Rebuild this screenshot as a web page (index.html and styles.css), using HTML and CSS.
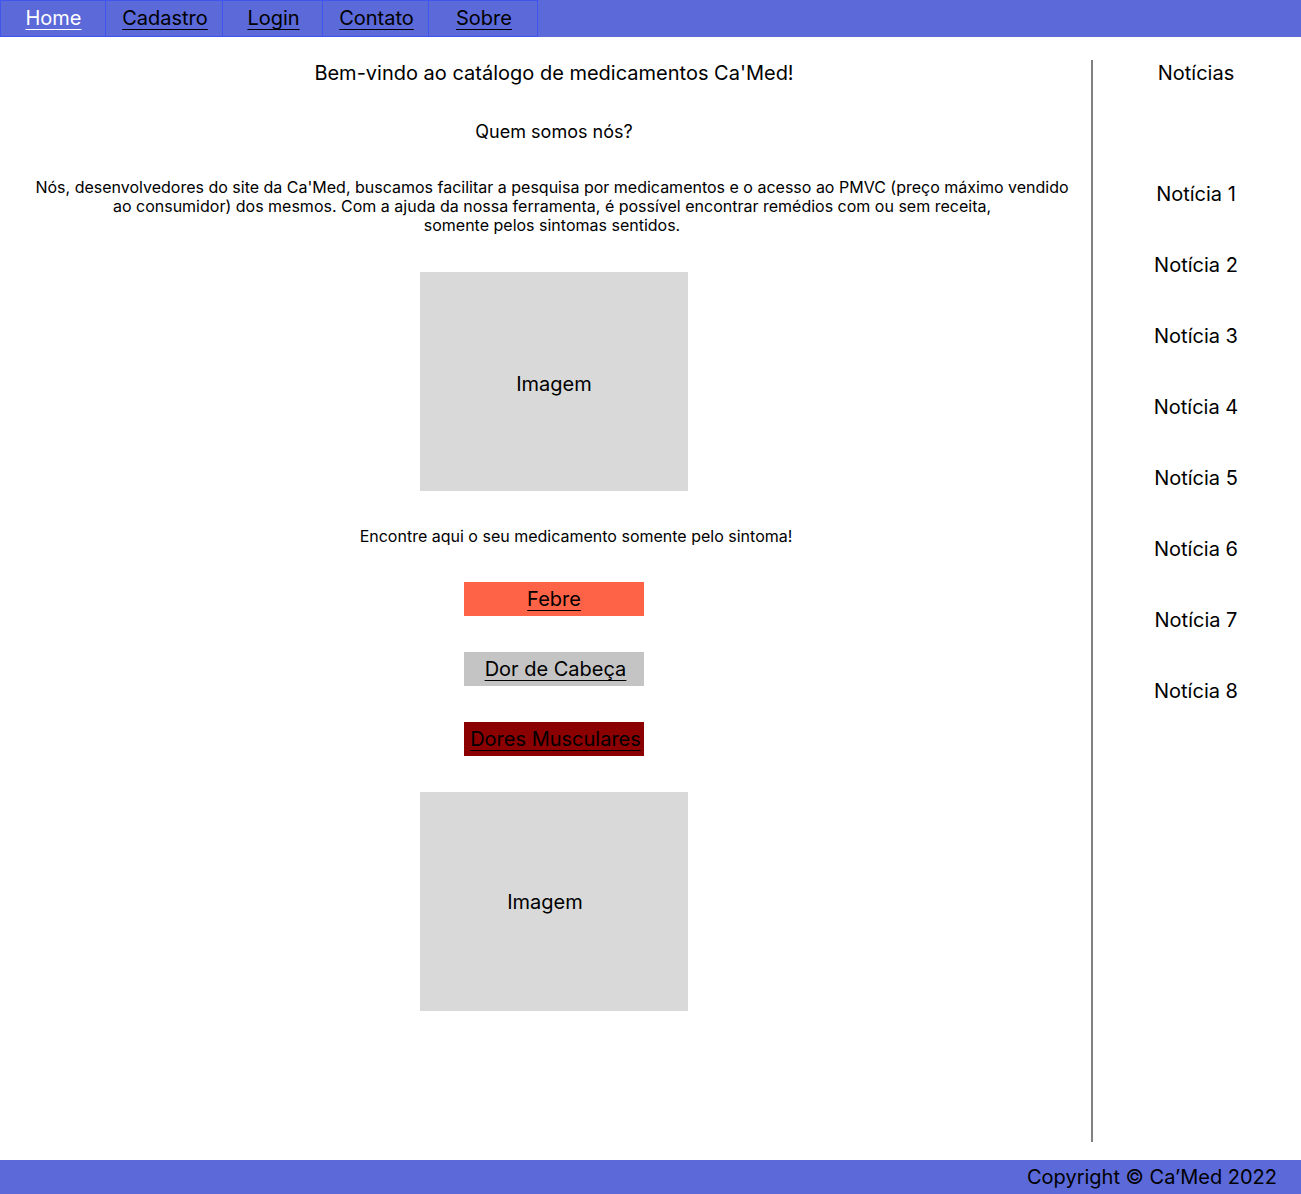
FILE: index.html
```html
<!DOCTYPE html>
<html lang="pt-BR">
<head>
<meta charset="utf-8">
<title>Ca'Med</title>
<link rel="stylesheet" href="styles.css">
</head>
<body>
<header class="topbar">
  <nav class="nav">
    <a class="nav-item nav-home active" href="#">Home</a>
    <a class="nav-item nav-cadastro" href="#">Cadastro</a>
    <a class="nav-item nav-login" href="#">Login</a>
    <a class="nav-item nav-contato" href="#">Contato</a>
    <a class="nav-item nav-sobre" href="#">Sobre</a>
  </nav>
</header>
<div class="layout">
  <main class="content">
    <h1 class="title">Bem-vindo ao catálogo de medicamentos Ca'Med!</h1>
    <h2 class="subtitle">Quem somos nós?</h2>
    <p class="about">Nós, desenvolvedores do site da Ca'Med, buscamos facilitar a pesquisa por medicamentos e o acesso ao PMVC (preço máximo vendido<br>ao consumidor) dos mesmos. Com a ajuda da nossa ferramenta, é possível encontrar remédios com ou sem receita,<br>somente pelos sintomas sentidos.</p>
    <div class="image-box image-box-first">Imagem</div>
    <p class="find">Encontre aqui o seu medicamento somente pelo sintoma!</p>
    <a class="symptom symptom-fever" href="#">Febre</a>
    <a class="symptom symptom-head" href="#">Dor de Cabeça</a>
    <a class="symptom symptom-muscle" href="#">Dores Musculares</a>
    <div class="image-box image-box-second">Imagem</div>
  </main>
  <aside class="news">
    <h3 class="news-title">Notícias</h3>
    <ul class="news-list">
      <li>Notícia 1</li>
      <li>Notícia 2</li>
      <li>Notícia 3</li>
      <li>Notícia 4</li>
      <li>Notícia 5</li>
      <li>Notícia 6</li>
      <li>Notícia 7</li>
      <li>Notícia 8</li>
    </ul>
  </aside>
</div>
<footer class="footer">Copyright © Ca’Med 2022</footer>
</body>
</html>
```

FILE: styles.css
```css
* {
  box-sizing: border-box;
}

html, body {
  margin: 0;
  padding: 0;
}

body {
  font-family: Inter, "Noto Sans", "Liberation Sans", sans-serif;
  color: #000;
  background: #fff;
  width: 1301px;
}

.topbar {
  background: #5b69d9;
  height: 37px;
}

.nav {
  display: flex;
  height: 37px;
}

.nav-item {
  display: block;
  height: 37px;
  line-height: 35px;
  border: 1px solid #3f55ee;
  border-left-width: 0;
  text-align: center;
  font-size: 20px;
  color: #000;
  text-decoration: underline;
  text-underline-offset: 4px;
  text-decoration-thickness: 1px;
}

.nav-home {
  width: 106px;
  border-left-width: 1px;
  padding-left: 1px;
}
.nav-cadastro { width: 117px; padding-left: 2px; }
.nav-login { width: 100px; padding-left: 2px; }
.nav-contato { width: 106px; padding-left: 2px; }
.nav-sobre { width: 109px; padding-left: 2px; }

.nav-item.active {
  color: #fff;
}

.layout {
  display: flex;
  height: 1123px;
}

.content {
  width: 1091px;
  padding-left: 17px;
  padding-top: 24px;
  display: flex;
  flex-direction: column;
  align-items: center;
  gap: 36px;
  text-align: center;
}

.title {
  margin: 0;
  font-size: 20px;
  line-height: 24px;
  font-weight: 400;
}

.subtitle {
  margin: 1px 0 0;
  font-size: 18px;
  line-height: 20px;
  font-weight: 400;
}

.about {
  margin: 0 0 1px;
  padding-right: 4px;
  font-size: 16px;
  line-height: 19px;
}

.image-box {
  width: 268px;
  height: 219px;
  background: #d9d9d9;
  display: flex;
  align-items: center;
  justify-content: center;
  font-size: 20px;
  flex-shrink: 0;
}

.image-box-first {
  padding-top: 5px;
}

.image-box-second {
  padding-right: 18px;
  padding-top: 1px;
}

.find {
  margin: 0;
  font-size: 16px;
  line-height: 19px;
  padding-left: 44px;
}

.symptom {
  display: block;
  width: 180px;
  height: 34px;
  line-height: 34px;
  font-size: 20px;
  color: #000;
  text-decoration: underline;
  text-underline-offset: 4px;
  text-decoration-thickness: 1px;
  flex-shrink: 0;
}

.symptom-fever { background: #ff6347; }
.symptom-head { background: #c4c4c4; padding-left: 3px; }
.symptom-muscle { background: #8b0000; padding-left: 3px; }

.news {
  width: 210px;
  margin: 23px 0 18px;
  border-left: 2px solid #808080;
  padding-top: 1px;
  padding-right: 2px;
  text-align: center;
}

.news-title {
  margin: 0;
  font-size: 20px;
  line-height: 24px;
  font-weight: 400;
}

.news-list {
  list-style: none;
  margin: 97px 0 0;
  padding: 0;
  display: flex;
  flex-direction: column;
  gap: 47px;
  font-size: 20px;
  line-height: 24px;
}

.footer {
  background: #5b69d9;
  height: 34px;
  line-height: 34px;
  text-align: right;
  padding-right: 24px;
  font-size: 20px;
}
```
